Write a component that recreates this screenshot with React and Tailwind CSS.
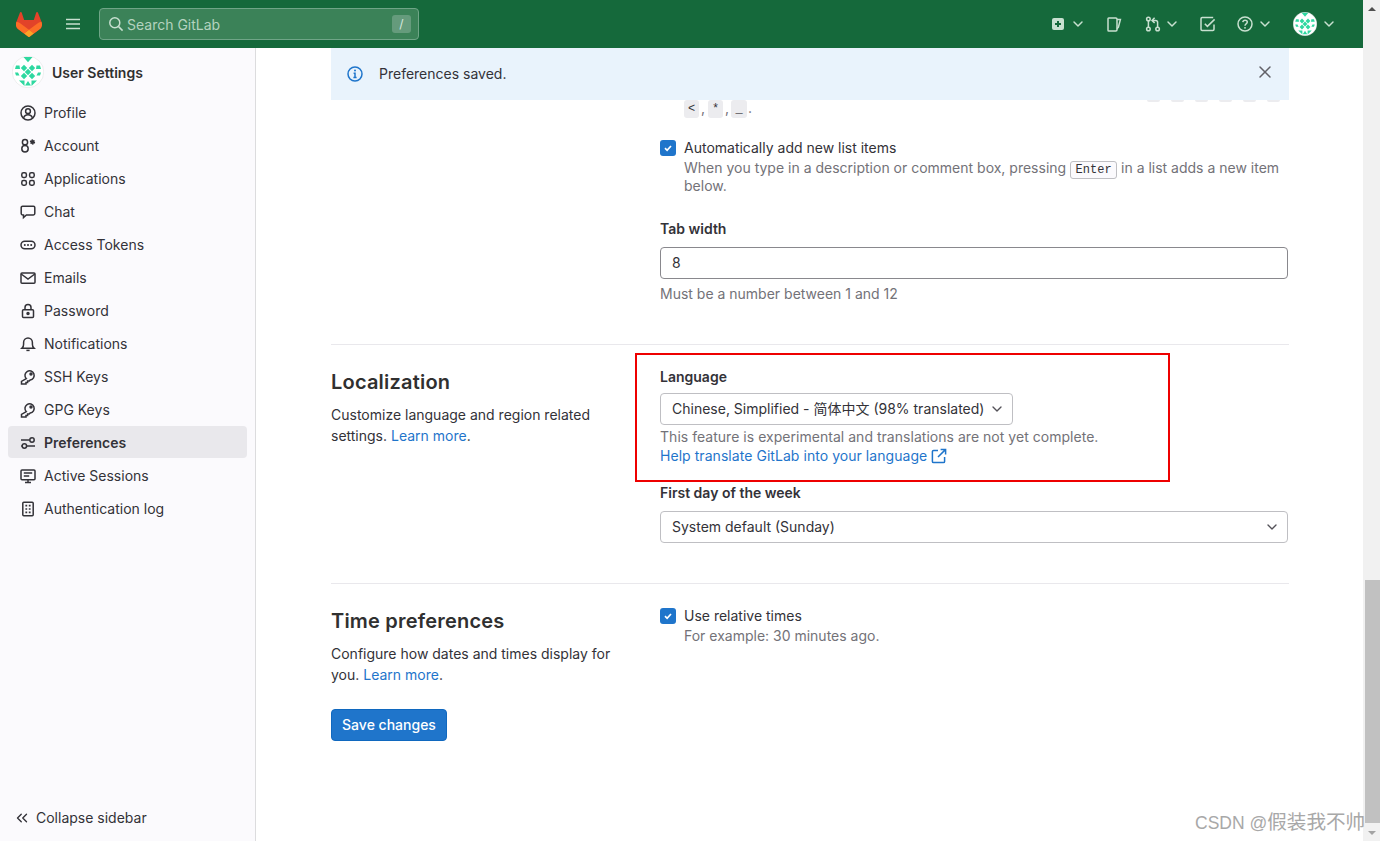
import React from 'react';
import { ChevronDown, ChevronsLeft, X } from 'lucide-react';

// gitlab-style 16px line icons
const paths = {
  profile: <><circle cx="8" cy="8" r="7" /><circle cx="8" cy="6.2" r="2.4" /><path d="M3.6 13c.6-2.2 2.2-3.2 4.4-3.2s3.8 1 4.4 3.2" /></>,
  account: <><circle cx="5" cy="4.2" r="2.6" /><circle cx="5" cy="10.8" r="3.2" /><circle cx="12.5" cy="4" r="1.9" fill="currentColor" strokeDasharray="1.2 .6" /></>,
  apps: <><rect x="1.8" y="1.8" width="4.6" height="4.6" rx="1.6" /><rect x="9.6" y="1.8" width="4.6" height="4.6" rx="1.6" /><rect x="1.8" y="9.6" width="4.6" height="4.6" rx="1.6" /><rect x="9.6" y="9.6" width="4.6" height="4.6" rx="1.6" /></>,
  chat: <path d="M2.6 2.2h10.8c.8 0 1.4.6 1.4 1.4v6c0 .8-.6 1.4-1.4 1.4H6.4l-2.9 2.6V11h-.9c-.8 0-1.4-.6-1.4-1.4v-6c0-.8.6-1.4 1.4-1.4z" />,
  token: <><rect x="1" y="4.2" width="14" height="7.6" rx="3.8" /><path d="M4.8 8h.01M8 8h.01M11.2 8h.01" strokeWidth="2" strokeLinecap="round" /></>,
  mail: <><rect x="1" y="3" width="14" height="10.2" rx="1" /><path d="M1.2 4l6.8 5 6.8-5" /></>,
  lock: <><rect x="2.5" y="6.8" width="11" height="7.7" rx="1" /><path d="M5 6.8V4.5a3 3 0 0 1 6 0v2.3" /><circle cx="8" cy="10.6" r="1" fill="currentColor" /></>,
  bell: <><path d="M2 12.2c1.2-1 1.6-2.2 1.6-4V6.4a4.4 4.4 0 0 1 8.8 0v1.8c0 1.8.4 3 1.6 4z" /><path d="M6.4 14.4h3.2" /></>,
  key: <><path d="M6.3 9.7a4.6 4.6 0 1 1 3.9 1.3l-1 1H7.6v1.6H6v1.4H1.5v-2.6z" /><circle cx="11" cy="5" r="1" fill="currentColor" /></>,
  prefs: <><path d="M1 5h8.6M1.2 11h1M7 11h8" /><circle cx="12" cy="5" r="2.2" /><circle cx="4.4" cy="11" r="2.2" /></>,
  monitor: <><rect x="1" y="2" width="14" height="9.8" rx="1" /><path d="M3.8 5h8.4M3.8 8h5.4M5 14.4h6M8 12v2.4" /></>,
  log: <><rect x="2.8" y="1.2" width="10.4" height="13.6" rx="1" /><path d="M5.4 4.6h1.8M8.8 4.6h1.8M5.4 8h1.8M8.8 8h1.8M5.4 11.4h1.8M8.8 11.4h1.8" strokeWidth="1.6" /></>,
  info: <><circle cx="8" cy="8" r="7" /><path d="M6.6 7.2H8v4M6.4 11.4h3.2" /><circle cx="8" cy="4.6" r="1" fill="currentColor" stroke="none" /></>,
  search: <><circle cx="6.8" cy="6.8" r="5" /><path d="M10.6 10.6l4 4" /></>,
  issues: <><path d="M2.8 2h7c.7 0 1.2.5 1.2 1.2v10.6c0 .7-.5 1.2-1.2 1.2h-7c-.5 0-.8-.3-.8-.8V2.8c0-.5.3-.8.8-.8z" /><path d="M11 3.6h3.4l-2 7.6-1.4 1.6" /></>,
  mr: <><circle cx="3.4" cy="3" r="1.8" /><circle cx="3.4" cy="13" r="1.8" /><circle cx="12.6" cy="13" r="1.8" /><path d="M3.4 4.8v6.4M12.6 11.2V6.4c0-1.2-.8-2-2-2H7.6M9.6 1.8L7 4.4 9.6 7" /></>,
  todo: <><path d="M14 8.6v4.6c0 .7-.5 1.2-1.2 1.2H2.2c-.7 0-1.2-.5-1.2-1.2V2.8c0-.7.5-1.2 1.2-1.2h11" /><path d="M4.8 7.8l2.6 2.6L14.6 3.4" /></>,
  help: <><circle cx="8" cy="8" r="7" /><path d="M5.8 6.2C6 4.8 6.9 4.2 8.1 4.2c1.3 0 2.2.8 2.2 1.9 0 1.9-2.3 1.7-2.3 3.6" /><circle cx="8" cy="11.8" r=".9" fill="currentColor" stroke="none" /></>,
  external: <><path d="M7 2.4H2.6c-.7 0-1.2.5-1.2 1.2v9.8c0 .7.5 1.2 1.2 1.2h9.8c.7 0 1.2-.5 1.2-1.2V9" /><path d="M9.6 1.4h5v5M14.4 1.6L7 9" /></>,
  menu: <path d="M1 3.4h14M1 8h14M1 12.6h14" />,
};

function Icon({ name, className = 'w-4 h-4' }) {
  return (
    <svg viewBox="0 0 16 16" fill="none" stroke="currentColor" strokeWidth="1.5" className={`${className} shrink-0`}>
      {paths[name]}
    </svg>
  );
}

function Tanuki() {
  return (
    <svg viewBox="0 0 25 24" className="w-[26px] h-[25px] shrink-0">
      <path d="m24.507 9.5-.034-.09L21.082.562a.896.896 0 0 0-1.694.091l-2.29 7.01H7.825L5.535.653a.898.898 0 0 0-1.694-.09L.451 9.411.416 9.5a6.297 6.297 0 0 0 2.09 7.278l.012.01.03.022 5.16 3.867 2.56 1.935 1.554 1.176a1.051 1.051 0 0 0 1.268 0l1.555-1.176 2.56-1.935 5.197-3.89.014-.01A6.297 6.297 0 0 0 24.507 9.5Z" fill="#E24329" />
      <path d="m24.507 9.5-.034-.09a11.44 11.44 0 0 0-4.56 2.051l-7.447 5.632 4.742 3.584 5.197-3.89.014-.01A6.297 6.297 0 0 0 24.507 9.5Z" fill="#FC6D26" />
      <path d="m7.707 20.677 2.56 1.935 1.555 1.176a1.051 1.051 0 0 0 1.268 0l1.555-1.176 2.56-1.935-4.743-3.584-4.755 3.584Z" fill="#FCA326" />
      <path d="M5.01 11.461a11.43 11.43 0 0 0-4.56-2.05L.416 9.5a6.297 6.297 0 0 0 2.09 7.278l.012.01.03.022 5.16 3.867 4.745-3.584-7.444-5.632Z" fill="#FC6D26" />
    </svg>
  );
}

// identicon avatar, green diamonds on white
function Avatar({ className }) {
  const g = '#2ed8a0';
  return (
    <svg viewBox="0 0 32 32" className={`${className} shrink-0`}>
      <circle cx="16" cy="16" r="15.75" fill="#fff" stroke="#dcdcde" strokeWidth=".5" />
      <path d="M12 8.8l3.2 3.2-3.2 3.2L8.8 12zM20 8.8l3.2 3.2-3.2 3.2-3.2-3.2zM16 12.8l3.2 3.2-3.2 3.2-3.2-3.2zM12 16.8l3.2 3.2-3.2 3.2L8.8 20zM20 16.8l3.2 3.2-3.2 3.2-3.2-3.2z" fill={g} />
      <path d="M11.5 1h9L16 6.2zM4 9.5h3.5l.5 3.5H3zM28 9.5h-3.5l-.5 3.5h5zM3 16.5h3l1.5 3H4zM29 16.5h-3l-1.5 3H28z" fill={g} />
      <path d="M7 24.5h5.5V30zM25 24.5h-5.5V30zM16 25l3 4.5h-6z" fill={g} />
    </svg>
  );
}

const navItems = [
  ['profile', 'Profile'],
  ['account', 'Account'],
  ['apps', 'Applications'],
  ['chat', 'Chat'],
  ['token', 'Access Tokens'],
  ['mail', 'Emails'],
  ['lock', 'Password'],
  ['bell', 'Notifications'],
  ['key', 'SSH Keys'],
  ['key', 'GPG Keys'],
  ['prefs', 'Preferences'],
  ['monitor', 'Active Sessions'],
  ['log', 'Authentication log'],
];

const chevron = 'w-4 h-4 -mx-[2px]';

function Header() {
  return (
    <header className="h-12 shrink-0 bg-[#15693b] flex items-center pl-4 pr-7 text-[#c8e0d0]">
      <Tanuki />
      <Icon name="menu" className="w-4 h-4 ml-[23px]" />
      <div className="ml-[18px] w-[320px] h-8 rounded-[4px] border border-[#6fa587] bg-[#3b8258] flex items-center pl-2 pr-[7px]">
        <Icon name="search" className="w-4 h-4 text-[#c8e0d0]" />
        <span className="ml-[3px] pt-px text-sm text-[#b4d3bf]">Search GitLab</span>
        <span className="ml-auto w-[19px] h-[18px] rounded-[3px] bg-[#659b7c] flex items-center justify-center text-xs text-[#d9e9df]">/</span>
      </div>
      <div className="ml-auto flex items-center">
        <svg viewBox="0 0 16 16" className="w-4 h-4 shrink-0">
          <rect x="2" y="2" width="12" height="12" rx="2" fill="#c8e0d0" />
          <path d="M8 5v6M5 8h6" stroke="#15693b" strokeWidth="2" />
        </svg>
        <span className="ml-[6px] w-3 flex justify-center"><ChevronDown className={chevron} strokeWidth={2.2} /></span>
        <Icon name="issues" className="w-4 h-4 ml-[22px]" />
        <Icon name="mr" className="w-4 h-4 ml-[23px]" />
        <span className="ml-[5px] w-3 flex justify-center"><ChevronDown className={chevron} strokeWidth={2.2} /></span>
        <Icon name="todo" className="w-4 h-4 ml-[22px]" />
        <Icon name="help" className="w-4 h-4 ml-[21px]" />
        <span className="ml-[6px] w-3 flex justify-center"><ChevronDown className={chevron} strokeWidth={2.2} /></span>
        <Avatar className="w-6 h-6 ml-[22px]" />
        <span className="ml-[6px] w-3 flex justify-center"><ChevronDown className={chevron} strokeWidth={2.2} /></span>
      </div>
    </header>
  );
}

function Sidebar() {
  return (
    <aside className="w-[256px] shrink-0 bg-[#fbfafd] border-r border-[#dcdcde] flex flex-col">
      <div className="flex items-center gap-2 pl-3 pt-2 mb-2">
        <Avatar className="w-8 h-8" />
        <span className="pt-[2px] text-sm font-semibold text-[#303030]">User Settings</span>
      </div>
      <nav className="flex flex-col gap-px px-2">
        {navItems.map(([icon, label]) => (
          <div
            key={label}
            className={`h-8 w-[239px] flex items-center gap-2 pl-3 pt-[2px] rounded-[4px] text-sm text-[#333238] ${
              label === 'Preferences' ? 'bg-[#e9e8ec] font-semibold' : ''
            }`}
          >
            <Icon name={icon} />
            <span>{label}</span>
          </div>
        ))}
      </nav>
      <div className="mt-auto h-[46px] flex items-center pl-[13px] text-sm text-[#333238]">
        <ChevronsLeft className="w-[18px] h-[18px]" strokeWidth={1.8} />
        <span className="ml-[5px]">Collapse sidebar</span>
      </div>
    </aside>
  );
}

function Checkbox() {
  return (
    <span className="w-4 h-4 mt-[2px] shrink-0 rounded-[3px] bg-[#1f75cb] flex items-center justify-center">
      <svg viewBox="0 0 10 10" className="w-[10px] h-[10px]">
        <path d="M2 5.2l2.1 2.1L8 3" fill="none" stroke="#fff" strokeWidth="1.7" />
      </svg>
    </span>
  );
}

function Chip({ children, className = 'w-[15px]' }) {
  return (
    <code className={`inline-flex justify-center h-[18px] rounded-[3px] bg-[#ececef] text-xs leading-[18px] text-[#333238] font-['Liberation_Mono',monospace] ${className}`}>
      {children}
    </code>
  );
}

function Select({ children, className }) {
  return (
    <div className={`h-8 rounded-[4px] border border-[#bfbfc3] flex items-center justify-between pl-[11px] pr-[7px] text-sm text-[#333238] ${className}`}>
      <span>{children}</span>
      <ChevronDown className="w-4 h-4 text-[#535158]" strokeWidth={2} />
    </div>
  );
}

function Section({ title, children, body }) {
  return (
    <div className="grid grid-cols-[329px_1fr]">
      <div>
        <h4 className="pt-px text-xl leading-7 font-semibold tracking-[0.2px] text-[#303030]">{title}</h4>
        <p className="mt-[8px] max-w-[298px] text-sm leading-[21px] text-[#333238]">
          {body} <a className="text-[#1f75cb]">Learn more</a>.
        </p>
      </div>
      <div className="pr-px">{children}</div>
    </div>
  );
}

function Main() {
  return (
    <main className="flex-1 min-w-0 bg-white pl-[75px] pr-[74px] text-sm text-[#333238]">
      <div className="h-[52px] bg-[#e9f3fc] flex items-center pl-4 pr-[14px]">
        <Icon name="info" className="w-4 h-4 text-[#1f75cb]" />
        <span className="ml-4 text-[#333238]">Preferences saved.</span>
        <X className="w-5 h-5 ml-auto mb-1 text-[#626168]" strokeWidth={1.8} />
      </div>

      <div className="pl-[329px] pr-px">
        <div className="h-[18px] flex justify-between pl-6 pr-2">
          <div className="flex text-sm leading-[16px] text-[#737278]">
            <Chip>&lt;</Chip><span className="ml-[2px] mr-[3px]">,</span>
            <Chip>*</Chip><span className="ml-[2px] mr-[2px]">,</span>
            <Chip className="w-4">_</Chip><span className="ml-px">.</span>
          </div>
          <div className="flex gap-[11px] h-[2px]">
            {[1, 2, 3, 4, 5, 6].map((i) => (
              <span key={i} className="w-[13px] h-[2px] rounded-b-[3px] bg-[#ececef]" />
            ))}
          </div>
        </div>

        <div className="mt-5 flex gap-2">
          <Checkbox />
          <div>
            <div className="leading-5">Automatically add new list items</div>
            <div className="mt-px leading-[18px] text-[#737278]">
              When you type in a description or comment box, pressing{' '}
              <kbd className="px-[4.5px] py-px rounded-[3px] border border-[#bfbfc3] bg-[#fbfafd] text-xs leading-[14px] text-[#333238] font-['Liberation_Mono',monospace]">Enter</kbd>{' '}
              in a list adds a new item below.
            </div>
          </div>
        </div>

        <div className="mt-6 leading-5 font-semibold">Tab width</div>
        <div className="mt-2 h-8 rounded-[4px] border border-[#89888d] flex items-center pl-[11px]">8</div>
        <div className="mt-[5px] leading-5 text-[#737278]">Must be a number between 1 and 12</div>
      </div>

      <hr className="mt-10 border-[#e9e8ec]" />

      <div className="mt-[22px]">
        <Section title="Localization" body="Customize language and region related settings.">
          <div className="leading-5 font-semibold">Language</div>
          <Select className="mt-[6px] w-[353px]">Chinese, Simplified - 简体中文 (98% translated)</Select>
          <div className="mt-[2px] leading-[19px] tracking-[0.03px] text-[#737278]">This feature is experimental and translations are not yet complete.</div>
          <a className="leading-5 tracking-[0.05px] text-[#1f75cb] flex items-center">
            Help translate GitLab into your language
            <Icon name="external" className="w-4 h-4 ml-1" />
          </a>
          <div className="mt-[17px] leading-5 font-semibold">First day of the week</div>
          <Select className="mt-2">System default (Sunday)</Select>
        </Section>
      </div>

      <hr className="mt-10 border-[#e9e8ec]" />

      <div className="mt-[22px]">
        <Section title="Time preferences" body="Configure how dates and times display for you.">
          <div className="flex gap-2">
            <Checkbox />
            <div>
              <div className="leading-5">Use relative times</div>
              <div className="leading-5 text-[#737278]">For example: 30 minutes ago.</div>
            </div>
          </div>
        </Section>
      </div>

      <button className="mt-6 w-[116px] h-8 rounded-[4px] bg-[#1f75cb] border border-[#1068bf] text-sm font-medium text-white">
        Save changes
      </button>
    </main>
  );
}

function Scrollbar() {
  return (
    <div className="w-[17px] shrink-0 bg-[#f1f1f1] flex flex-col">
      <div className="h-[17px] flex items-center justify-center">
        <span className="w-0 h-0 border-x-[4px] border-x-transparent border-b-[4px] border-b-[#505050]" />
      </div>
      <div className="mt-[563px] h-[243px] ml-[2px] bg-[#c1c1c1]" />
      <div className="mt-auto h-[17px] flex items-center justify-center">
        <span className="w-0 h-0 border-x-[4px] border-x-transparent border-t-[4px] border-t-[#a3a3a3]" />
      </div>
    </div>
  );
}

export default function App() {
  return (
    <div className="relative h-[841px] w-[1380px] overflow-hidden flex bg-white font-['Inter','Noto_Sans_CJK_SC',sans-serif]">
      <div className="w-[1363px] shrink-0 flex flex-col">
        <Header />
        <div className="flex flex-1 min-h-0">
          <Sidebar />
          <Main />
        </div>
      </div>
      <Scrollbar />

      {/* red annotation drawn over the screenshot */}
      <div className="absolute left-[635px] top-[353px] w-[535px] h-[129px] border-2 border-[#ee0000]" />
      {/* watermark */}
      <div className="absolute left-[1195px] top-[808px] leading-7 whitespace-nowrap text-[#a8a8a8] font-['Liberation_Sans','Noto_Sans_CJK_SC',sans-serif]">
        <span className="text-[17.5px]">CSDN @</span><span className="text-[19.6px]">假装我不帅</span>
      </div>
    </div>
  );
}
